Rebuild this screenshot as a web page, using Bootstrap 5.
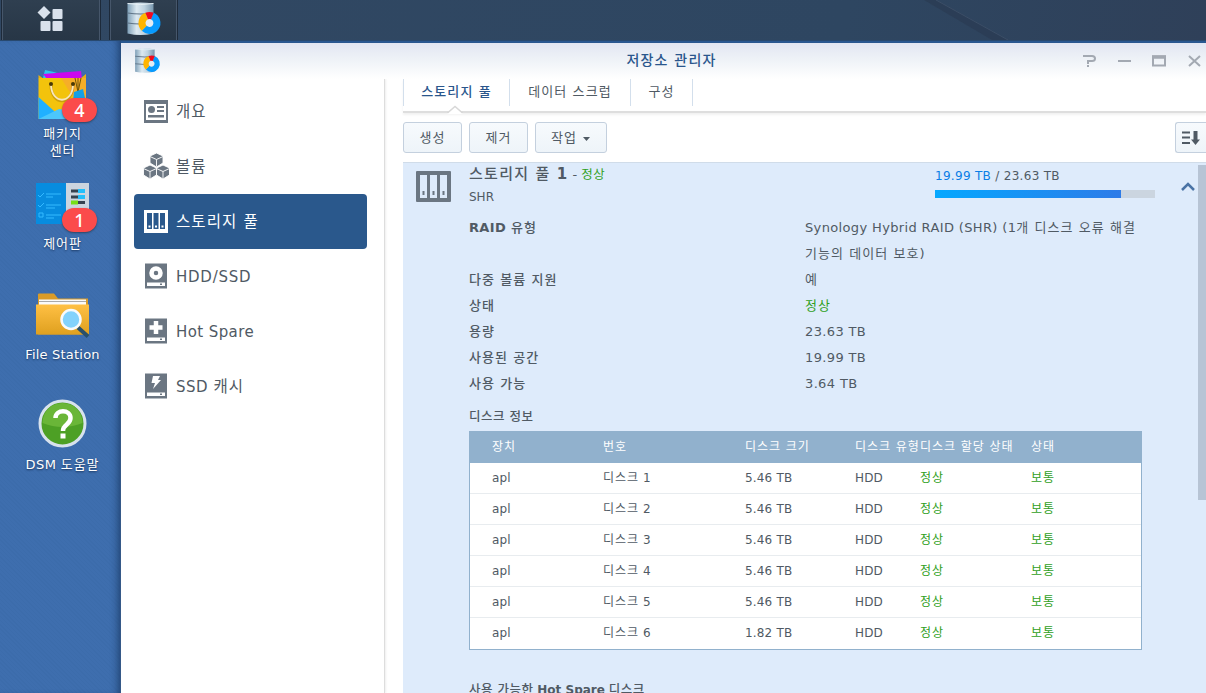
<!DOCTYPE html>
<html lang="ko">
<head>
<meta charset="utf-8">
<meta name="viewport" content="width=device-width, initial-scale=1">
<title>저장소 관리자</title>
<link href="https://cdn.jsdelivr.net/npm/bootstrap@5.3.0/dist/css/bootstrap.min.css" rel="stylesheet">
<style>
body{height:100vh;overflow:hidden;font-family:"DejaVu Sans","Noto Sans CJK KR",sans-serif;font-size:13px;line-height:18px;color:#505a64;background:#3d6eae}
.ko{font-size:13px;letter-spacing:1.05px}
.taskbar{height:41px;background:linear-gradient(100deg,#314863,#2e4661 70%,#2f4059);border-bottom:1px solid #28496f;position:relative;overflow:hidden}
.task{height:40px;background:linear-gradient(#2f3f50,#273646);border:solid #46566a;border-width:0 1px;outline:1px solid #1d2a3a}
.task.main-menu{width:98px;margin-left:2px}
.task.app{width:67px;margin-left:10px}
.streak{position:absolute;left:920px;top:0}
.desk{width:121px;background:repeating-linear-gradient(45deg,#3c6cab 0 1px,#3e6eae 1px 3px);padding:28px 0 0 4px;color:#fff;text-align:center;box-shadow:inset -8px 0 8px -6px #1c3c69;text-shadow:0 1px 2px #17325a}
.desk .ko{letter-spacing:.9px}
.shortcut{height:110px;position:relative;display:flex;flex-direction:column;align-items:center}
.shortcut svg{height:54px;width:60px;flex:none}
.shortcut .count{position:absolute;left:58px;top:29px;width:35px;height:24px;border-radius:12px;background:#fb4b4b;font-size:18px;line-height:24px;box-shadow:0 1px 2px #2228;text-shadow:none;font-family:"Noto Sans",sans-serif;font-weight:500}
.win{border-top:2px solid #2a5890;background:#fff;min-width:0}
.winhead{height:36px;background:linear-gradient(#e2e6f2,#eef2f7 45%,#fff);color:#2a568c}
.winhead .ttl{font-size:14px;letter-spacing:1.2px;font-weight:500;padding-left:16px;margin-top:-2px}
.side{width:264px;border-right:1px solid #ddd;box-shadow:1px 0 2px #eee;padding:5px 17px 0 13px}
.side a{height:55px;display:flex;align-items:center;gap:8px;padding-left:9px;color:#505a64;text-decoration:none;font-size:15px;letter-spacing:.5px;border-radius:4px}
.side a .ko{font-size:15.5px;letter-spacing:1.1px}
.side a.active{background:#2a588c;color:#fff}
.side svg{width:26px;height:28px;flex:none;margin:-2px -1px 0 0}
.tabs{height:34px;margin-left:18px;border-bottom:2px solid #dedede;box-shadow:0 2px 2px #f2f2f2;position:relative}
.tabs a{height:27px;line-height:26px;border-right:1px solid #d3dfec;text-align:center;color:#505a64;text-decoration:none;font-size:13px;letter-spacing:1.1px}
.tabs a.active{color:#2a568c;font-weight:500;border-left:1px solid #d3dfec}
.notch{position:absolute;left:44px;top:26px}
.tools{height:49px;margin-left:18px;padding-top:9px}
.tool{height:31px;border:1px solid #c4d0de;border-radius:3px;background:linear-gradient(#f7fafd,#eef4f9);color:#505a64;font-size:13px;letter-spacing:1px;padding:0;text-align:center}
.pool{margin-left:18px;background:#deebfb;border-top:1px solid #d0dce9;flex:1;position:relative;overflow:hidden}
.poolhead{height:52px}
.poolname{font-size:15px;letter-spacing:1.3px;font-weight:500}
.info{display:grid;grid-template-columns:336px 345px;margin-left:66px;line-height:26px;letter-spacing:.36px}
.info dt{font-weight:700}.info dt .ko{font-weight:500}
.info dd,.info dt{margin:0}
.ok{color:#2fa01c!important}
.usage{position:absolute;left:532px;top:4px;width:220px;font-size:12px;letter-spacing:.3px}
.usage .bar{height:8px;background:#cbd5e0;margin-top:5px}
.usage .fill{height:8px;background:linear-gradient(90deg,#05a8ff,#2d7be8)}
.scroller{position:absolute;right:0;top:2px;width:8px;height:335px;background:#b7c4d5}
.disks{width:673px;margin-left:66px;border:1px solid #91b1cd;background:#fff;font-size:12px;letter-spacing:.18px}
.disks .line{display:grid;grid-template-columns:111px 142px 110px 65px 111px 1fr;padding-left:22px;height:31px;line-height:31px;border-bottom:1px solid #e8ecef;white-space:nowrap}
.disks .line:last-child{border-bottom:0}
.disks .heads{height:31px;background:#91b1cd;color:#fff;border:0}
.disks .ko{font-size:12px;letter-spacing:.95px}
.subhead{font-size:12.5px;letter-spacing:.5px;font-weight:500}
</style>
</head>
<body class="d-flex flex-column">
<header class="taskbar d-flex flex-shrink-0">
  <div class="task main-menu d-flex align-items-center justify-content-center"><svg width="28" height="28" viewBox="0 0 28 28" fill="#d9e1ec"><path d="M7 0l6.500 6.500L7 13 .5 6.500z"/><rect x="15.500" y="3" width="10" height="10" rx="1"/><rect x="3.500" y="15" width="10" height="10" rx="1"/><rect x="15.500" y="15" width="10" height="10" rx="1"/></svg></div>
  <div class="task app d-flex align-items-center justify-content-center"><svg width="36" height="36" viewBox="0 0 36 36"><use href="#storage"/></svg></div>
  <svg class="streak" width="100" height="40"><path d="M4 0h12l72 40H72z" fill="#293a52" opacity=".65"/><path d="M16 0l72 40" stroke="#3b4d66"/></svg>
</header>
<svg width="0" height="0" class="position-absolute"><defs>
  <linearGradient id="steel"><stop stop-color="#7fa0b8"/><stop offset=".35" stop-color="#dce9f1"/><stop offset=".65" stop-color="#bdd2e0"/><stop offset="1" stop-color="#7896ad"/></linearGradient>
  <linearGradient id="gold" x2="0" y2="1"><stop stop-color="#ffc044"/><stop offset="1" stop-color="#dfa01f"/></linearGradient>
  <g id="storage"><path d="M1.500 1.500q13-2 26 0v30q-13 3-26 0z" fill="url(#steel)"/><path d="M1.500 1.500q13 2 26 0" fill="none" stroke="#e8f1f6"/><path d="M1.500 11q13 2 26 0M1.500 21q13 2 26 0" fill="none" stroke="#607487" stroke-width="1.200"/>
  <circle cx="23.500" cy="21" r="4.500" fill="#e4edf4"/>
  <g fill="none" stroke-width="7"><path d="M26.300 14A7.500 7.500 0 1 1 18.200 26.300" stroke="#079bff"/><path d="M18.200 26.300A7.500 7.500 0 0 1 20.700 14" stroke="#ffb500"/><path d="M20.700 14A7.500 7.500 0 0 1 26.300 14" stroke="#f00a20"/></g></g>
</defs></svg>
<div class="d-flex flex-grow-1" style="min-height:0">
  <aside class="desk flex-shrink-0">
    <div class="shortcut"><svg viewBox="0 0 60 54"><path d="M10 9l2-8 9 2 18 6z" fill="#2cc5ee"/><path d="M10 5l38-3 1 8H14z" fill="#cb08ee"/><path d="M5.500 6l4 3H48l5-4v4H5.500z" fill="#e8ae12"/><path d="M5.500 9H53v41H5.500z" fill="#f3c30c"/><path d="M28 9h25v32L38 25z" fill="#f6ae28"/><path d="M5.500 28L30 50H5.500z" fill="#20b0ff"/><path d="M5.500 50L26 40l27 4v6z" fill="#4cc6fb"/><path d="M18 16c0 21 22 21 22 0" fill="none" stroke="#8f6b12" opacity=".4" stroke-width="3"/><path d="M18 15c0 21 22 21 22 0" fill="none" stroke="#f7e6bf" stroke-width="1.800"/><circle cx="18" cy="15" r="2" fill="#493806"/><circle cx="40" cy="15" r="2" fill="#493806"/><path d="M42 9l3 14M48 9l-3 14M45 9v14" stroke="#70550a" fill="none"/><path d="M41 23l9-3 2 9-12 3z" fill="#159fe5"/></svg><span class="count">4</span><span class="ko" style="line-height:17px;margin-top:2px">패키지<br>센터</span></div>
    <div class="shortcut"><svg viewBox="0 0 60 54"><path d="M3 4h31v41H3z" fill="#078cdf"/><path d="M33 4h23v41H33z" fill="#cbd5df"/><g fill="none" stroke="#35baff"><path d="M5 16l2 2 4-4M5 26l2 2 4-4M6 34h4v4H6zM13 15h15M13 18h7M13 26h15M13 29h9M13 36h15M13 39h8"/></g><path d="M38 12h14M38 18h14M38 23.500h14" stroke="#354250" stroke-width="3"/><path d="M45 12h7M45 18h7" stroke="#22bffb" stroke-width="4"/><path d="M38 23.500h7" stroke="#76df18" stroke-width="4"/></svg><span class="count">1</span><span class="ko" style="margin-top:2px">제어판</span></div>
    <div class="shortcut"><svg viewBox="0 0 60 54"><g transform="translate(0 1.500)"><path d="M5 4q0-1 1-1h15l4 5h30v36H5z" fill="#d99b28"/><path d="M6 9h47v6H6z" fill="#fafafa"/><path d="M6 11h47" stroke="#aaa"/><path d="M3 14h53v30H3z" fill="url(#gold)"/><path d="M45 37l10 9" stroke="#29506b" stroke-width="4"/><circle cx="38" cy="29" r="9.500" fill="#83d2fc" stroke="#f8fafc" stroke-width="2.500"/></g></svg><span style="margin-top:3px;letter-spacing:.2px">File Station</span></div>
    <div class="shortcut"><svg viewBox="0 0 60 54"><circle cx="29.500" cy="24.500" r="22.500" fill="#4da025" stroke="#d8e2ed" stroke-width="3"/><path d="M9.500 24a20 20 0 0 1 40 0q-20 8-40 0" fill="#76bf40" opacity=".7"/><path d="M22.500 19c0-9 15-9 15 0 0 7-7.500 6-7.500 13" fill="none" stroke="#fff" stroke-width="4.500"/><rect x="27.500" y="34.500" width="5" height="5" fill="#fff"/></svg><span style="margin-top:3px;letter-spacing:.4px">DSM <span class="ko">도움말</span></span></div>
  </aside>
  <section class="win flex-grow-1 d-flex flex-column">
    <div class="winhead flex-shrink-0 position-relative d-flex align-items-center justify-content-center">
      <svg class="position-absolute" style="left:13px;top:5px" width="27" height="27" viewBox="0 0 36 36"><use href="#storage"/></svg>
      <span class="ttl">저장소 관리자</span>
      <svg class="position-absolute end-0" style="top:9px" width="124" height="18" viewBox="0 0 124 18" fill="none" stroke="#a3a9b2" stroke-width="2"><path d="M1 4h9q3 0 3 2.500T10 9H6v3M6 13v2"/><path d="M36 9h13"/><rect x="71" y="4.500" width="12" height="9"/><path d="M70 5h14" stroke-width="3.500"/><path d="M107 4l11 10M118 4l-11 10"/></svg>
    </div>
    <div class="d-flex flex-grow-1" style="min-height:0">
      <nav class="side flex-shrink-0">
        <a href="#"><svg viewBox="0 0 26 28" fill="#6b7682"><path fill-rule="evenodd" d="M1 3h24v23H1zM3 7v16h20V7z"/><circle cx="8.500" cy="12.500" r="3.500"/><path d="M14 9h7v2h-7zM14 13h7v2h-7zM5 18h16v2.500H5z"/></svg><span class="ko">개요</span></a>
        <a href="#"><svg viewBox="0 0 26 28" fill="#6b7682" stroke="#fff" stroke-width=".9"><g id="cube"><path d="M13.500 1l6.500 3v7l-6.500 4L7 11V4z"/><path d="M7 4.500l6.500 3 6.500-3M13.500 7.500v7"/></g><use href="#cube" x="-6.500" y="12"/><use href="#cube" x="6.500" y="12"/></svg><span class="ko">볼륨</span></a>
        <a href="#" class="active"><svg viewBox="0 0 26 28"><path d="M1 3h24v23H1z" fill="#fff"/><g fill="#2a588c"><path d="M4 6h5v16H4zM10.500 6h5v16h-5zM17 6h5v16h-5z"/></g><path d="M5.500 18.500h2v2h-2zM12 18.500h2v2h-2zM18.500 18.500h2v2h-2z" fill="#fff"/></svg><span class="ko">스토리지 풀</span></a>
        <a href="#"><svg viewBox="0 0 26 28"><use href="#drive"/><circle cx="13" cy="11" r="4.500" fill="#6b7682" stroke="#fff" stroke-width="4.500"/></svg><span style="letter-spacing:.75px">HDD/SSD</span></a>
        <a href="#"><svg viewBox="0 0 26 28"><use href="#drive"/><path d="M13 4v13M6.500 10.500h13" stroke="#fff" stroke-width="4.500"/></svg><span style="letter-spacing:.4px">Hot Spare</span></a>
        <a href="#"><svg viewBox="0 0 26 28"><use href="#drive"/><path d="M10 4h7l-2 4h3l-8 9 2-6H8.500z" fill="#fff"/></svg><span>SSD <span class="ko">캐시</span></span></a>
      </nav>
      <svg width="0" height="0" class="position-absolute"><defs><g id="drive"><path d="M2 1.500h22v25H2z" fill="#6b7682"/><path d="M4 20.500h18V24H4z" fill="#fff"/><path d="M17 21.500h2V23h-2z" fill="#6b7682"/></g></defs></svg>
      <main class="flex-grow-1 d-flex flex-column" style="min-width:0">
        <div class="tabs d-flex flex-shrink-0"><a href="#" class="active" style="width:107px">스토리지 풀</a><a href="#" style="width:121px">데이터 스크럽</a><a href="#" style="width:62px">구성</a>
          <svg class="notch" width="16" height="9"><path d="M0 8h1l7-7 7 7h1v1H0z" fill="#fff"/><path d="M0 7.500h1l7-6 7 6h1" fill="none" stroke="#d8d8d8" stroke-width="1.500"/></svg></div>
        <div class="tools d-flex flex-shrink-0"><button class="tool" style="width:59px;margin-right:7px">생성</button><button class="tool" style="width:59px;margin-right:7px">제거</button><button class="tool" style="width:72px">작업 <svg width="9" height="5"><path d="M1 1h7L4.500 5z" fill="#505a64"/></svg></button>
          <button class="tool ms-auto rounded-end-0 border-end-0" style="width:31px"><svg width="20" height="18" fill="none" stroke="#505a64"><path d="M1 3.500h8M1 8.500h8M1 14h8" stroke-width="2.200"/><path d="M14.500 2v9" stroke-width="4"/><path d="M10 10.500h9L14.500 16z" fill="#505a64" stroke="none"/></svg></button></div>
        <div class="pool">
          <svg class="position-absolute" style="left:13px;top:8px" width="35" height="31"><rect width="35" height="31" rx="1" fill="#6b7682"/><path d="M4 4h7v23H4zM14 4h7v23h-7zM24 4h7v23h-7z" fill="#deebfb"/><path d="M6.500 20h2v4h-2zM16.500 20h2v4h-2zM26.500 20h2v4h-2z" fill="#6b7682"/></svg>
          <div class="poolhead" style="padding:2px 0 0 66px"><div><span class="poolname">스토리지 풀 <b>1</b></span> - <span class="ok" style="font-size:12.5px;letter-spacing:.5px">정상</span></div><div style="margin-top:4px;font-size:12px">SHR</div></div>
          <div class="usage"><span style="color:#0a7ee6">19.99 TB</span> / 23.63 TB<div class="bar"><div class="fill" style="width:84.6%"></div></div></div>
          <svg class="position-absolute" style="left:777px;top:18px" width="16" height="12"><path d="M2 9l6-6 6 6" fill="none" stroke="#4a73a5" stroke-width="2.500"/></svg>
          <div class="scroller"></div>
          <dl class="info mb-0"><dt>RAID <span class="ko">유형</span></dt><dd>Synology Hybrid RAID (SHR) (1<span class="ko">개 디스크 오류 해결<br>기능의 데이터 보호)</span></dd>
            <dt><span class="ko">다중 볼륨 지원</span></dt><dd class="ko">예</dd><dt><span class="ko">상태</span></dt><dd class="ok ko">정상</dd><dt><span class="ko">용량</span></dt><dd>23.63 TB</dd><dt><span class="ko">사용된 공간</span></dt><dd>19.99 TB</dd><dt><span class="ko">사용 가능</span></dt><dd>3.64 TB</dd></dl>
          <div class="subhead" style="margin:11px 0 5px 66px">디스크 정보</div>
          <div class="disks">
            <div class="line heads ko"><span>장치</span><span>번호</span><span>디스크 크기</span><span>디스크 유형</span><span>디스크 할당 상태</span><span>상태</span></div>
            <div class="line"><span>apl</span><span><span class="ko">디스크</span> 1</span><span>5.46 TB</span><span>HDD</span><span class="ok ko">정상</span><span class="ok ko">보통</span></div>
            <div class="line"><span>apl</span><span><span class="ko">디스크</span> 2</span><span>5.46 TB</span><span>HDD</span><span class="ok ko">정상</span><span class="ok ko">보통</span></div>
            <div class="line"><span>apl</span><span><span class="ko">디스크</span> 3</span><span>5.46 TB</span><span>HDD</span><span class="ok ko">정상</span><span class="ok ko">보통</span></div>
            <div class="line"><span>apl</span><span><span class="ko">디스크</span> 4</span><span>5.46 TB</span><span>HDD</span><span class="ok ko">정상</span><span class="ok ko">보통</span></div>
            <div class="line"><span>apl</span><span><span class="ko">디스크</span> 5</span><span>5.46 TB</span><span>HDD</span><span class="ok ko">정상</span><span class="ok ko">보통</span></div>
            <div class="line"><span>apl</span><span><span class="ko">디스크</span> 6</span><span>1.82 TB</span><span>HDD</span><span class="ok ko">정상</span><span class="ok ko">보통</span></div>
          </div>
          <div style="margin:31px 0 0 66px;font-size:12px;white-space:nowrap"><span class="subhead">사용 가능한</span> <b>Hot Spare</b> <span class="subhead">디스크</span></div>
        </div>
      </main>
    </div>
  </section>
</div>
<script src="https://cdn.jsdelivr.net/npm/bootstrap@5.3.0/dist/js/bootstrap.bundle.min.js"></script>
</body>
</html>
